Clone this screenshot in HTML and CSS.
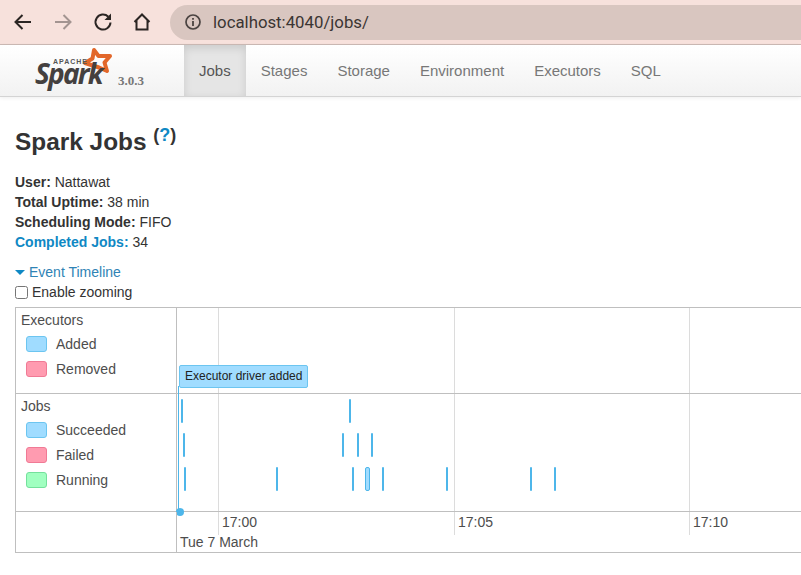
FILE: index.html
```html
<!DOCTYPE html>
<html lang="en">
<head>
    <meta charset="UTF-8">
    <title>Spark Jobs</title>
    <link rel="stylesheet" href="styles.css">
</head>
<body>
<div class="browser-bar">
    <svg class="tool" width="24" height="24" viewBox="0 0 24 24"><path d="M20 12H5M11.500 5L4.500 12L11.500 19" fill="none" stroke="#2b2523" stroke-width="2"/></svg>
    <svg class="tool" width="24" height="24" viewBox="0 0 24 24"><path d="M4 12H19M12.500 5L19.500 12L12.500 19" fill="none" stroke="#a39491" stroke-width="2"/></svg>
    <svg class="tool" width="24" height="24" viewBox="0 0 24 24"><path d="M19.500 12.500A7.500 7.500 0 1 1 17.300 6.700" fill="none" stroke="#2b2523" stroke-width="2"/><path d="M20 3.500V10H13.500Z" fill="#2b2523"/></svg>
    <svg class="tool" width="24" height="24" viewBox="0 0 24 24"><path d="M4.500 12L12 4.500L19.500 12M6.500 10.500V19.500H17.500V10.500" fill="none" stroke="#2b2523" stroke-width="2"/></svg>
    <div class="address">
        <svg width="18" height="18" viewBox="0 0 18 18"><circle cx="9" cy="9" r="7" fill="none" stroke="#4a4341" stroke-width="1.700"/><path d="M9 8V13M9 5V6.700" stroke="#4a4341" stroke-width="1.800"/></svg>
        <span>localhost:4040/jobs/</span>
    </div>
</div>

<div class="navbar">
    <div class="brand">
        <div class="logo">
            <svg class="logo-star" width="36" height="36" viewBox="0 0 36 36"><path d="M14 4L18.500 10L30 10L24.500 16.500L27 25L19 21.500L5 17L12.500 12.500Z" fill="none" stroke="#e2672a" stroke-width="4" stroke-linejoin="round"/></svg>
            <span class="logo-apache">APACHE</span>
            <span class="logo-spark">Spark</span>
        </div>
        <span class="version">3.0.3</span>
    </div>
    <ul class="tabs">
        <li class="tab active">Jobs</li>
        <li class="tab">Stages</li>
        <li class="tab">Storage</li>
        <li class="tab">Environment</li>
        <li class="tab">Executors</li>
        <li class="tab">SQL</li>
    </ul>
</div>

<div class="content">
    <h3 class="title">Spark Jobs <sup class="help">(<a>?</a>)</sup></h3>
    <ul class="summary">
        <li><strong>User:</strong> Nattawat</li>
        <li><strong>Total Uptime:</strong> 38 min</li>
        <li><strong>Scheduling Mode:</strong> FIFO</li>
        <li><a><strong>Completed Jobs:</strong></a> 34</li>
    </ul>
    <div class="timeline-toggle"><span class="arrow"></span><a>Event Timeline</a></div>
    <label class="zoom-option"><input type="checkbox"> Enable zooming</label>

    <div class="timeline">
        <div class="labels executors-label">
            <div class="group-name">Executors</div>
            <div class="legend"><span class="swatch blue"></span>Added</div>
            <div class="legend"><span class="swatch red"></span>Removed</div>
        </div>
        <div class="panel executors-panel">
            <span class="grid-line" style="left: 41px"></span>
            <span class="grid-line" style="left: 277px"></span>
            <span class="grid-line" style="left: 512px"></span>
            <div class="event-box">Executor driver added</div>
        </div>
        <div class="labels jobs-label">
            <div class="group-name">Jobs</div>
            <div class="legend"><span class="swatch blue"></span>Succeeded</div>
            <div class="legend"><span class="swatch red"></span>Failed</div>
            <div class="legend"><span class="swatch green"></span>Running</div>
        </div>
        <div class="panel jobs-panel">
            <span class="grid-line" style="left: 41px"></span>
            <span class="grid-line" style="left: 277px"></span>
            <span class="grid-line" style="left: 512px"></span>
            <span class="job" style="left: 4px; top: 5px"></span>
            <span class="job" style="left: 172px; top: 5px"></span>
            <span class="job" style="left: 6px; top: 39px"></span>
            <span class="job" style="left: 165px; top: 39px"></span>
            <span class="job" style="left: 180px; top: 39px"></span>
            <span class="job" style="left: 194px; top: 39px"></span>
            <span class="job" style="left: 7px; top: 73px"></span>
            <span class="job" style="left: 99px; top: 73px"></span>
            <span class="job" style="left: 175px; top: 73px"></span>
            <span class="job wide" style="left: 188px; top: 73px"></span>
            <span class="job" style="left: 205px; top: 73px"></span>
            <span class="job" style="left: 269px; top: 73px"></span>
            <span class="job" style="left: 353px; top: 73px"></span>
            <span class="job" style="left: 377px; top: 73px"></span>
            <span class="event-line"></span>
            <span class="event-dot"></span>
        </div>
        <div class="labels axis-label"></div>
        <div class="panel axis">
            <span class="grid-line short" style="left: 41px"></span>
            <span class="grid-line short" style="left: 277px"></span>
            <span class="grid-line short" style="left: 512px"></span>
            <span class="tick" style="left: 45px">17:00</span>
            <span class="tick" style="left: 281px">17:05</span>
            <span class="tick" style="left: 516px">17:10</span>
            <span class="date">Tue 7 March</span>
        </div>
    </div>
</div>
</body>
</html>
```

FILE: styles.css
```css
html, body {
    margin: 0;
    height: 575px;
    overflow: hidden;
}
body {
    background-color: #ffffff;
    color: #333333;
    font-family: "Liberation Sans", Arial, sans-serif;
    font-size: 14px;
}
a {
    color: #0f88c4;
}

.browser-bar {
    display: flex;
    align-items: center;
    height: 45px;
    box-sizing: border-box;
    padding-left: 11px;
    background-color: #f7e1dc;
    border-bottom: 1px solid #cdbab5;
}
.tool {
    flex: none;
    margin-right: 16px;
}
.tool:nth-child(3) {
    margin-right: 15px;
}
.tool:nth-child(4) {
    margin-right: 16px;
}
.address {
    display: flex;
    align-items: center;
    gap: 11px;
    flex: 1;
    height: 35px;
    padding-left: 14px;
    border-radius: 18px 0 0 18px;
    background-color: #d9c6c0;
    color: #3b3533;
    font-family: "Roboto", sans-serif;
    font-size: 16.8px;
}

.navbar {
    display: flex;
    height: 52px;
    box-sizing: border-box;
    background-image: linear-gradient(to bottom, #ffffff, #f2f2f2);
    border-bottom: 1px solid #d4d4d4;
    box-shadow: 0 1px 4px rgba(0, 0, 0, 0.07);
}
.brand {
    display: flex;
    width: 184px;
    flex: none;
}
.logo {
    position: relative;
    width: 118px;
}
.logo-star {
    position: absolute;
    left: 80px;
    top: 1px;
}
.logo-apache {
    position: absolute;
    left: 53px;
    top: 14px;
    font-size: 7px;
    line-height: 6px;
    font-weight: bold;
    letter-spacing: 1px;
    color: #555555;
}
.logo-spark {
    position: absolute;
    left: 35px;
    top: 20px;
    font-family: "Open Sans", sans-serif;
    font-size: 28px;
    line-height: 16px;
    font-style: italic;
    font-weight: 700;
    letter-spacing: -1.8px;
    color: #44403f;
}
.version {
    margin-top: 28px;
    font-family: "Liberation Serif", serif;
    font-size: 13px;
    font-weight: bold;
    color: #777777;
}
.tabs {
    display: flex;
    margin: 0;
    padding: 0;
    list-style: none;
}
.tab {
    padding: 17px 15px 0;
    color: #777777;
    font-size: 15px;
}
.tab.active {
    background-color: #e5e5e5;
    color: #555555;
    box-shadow: inset 0 3px 8px rgba(0, 0, 0, 0.12);
}

.content {
    padding: 0 0 0 15px;
}
.title {
    margin: 29px 0 0;
    font-size: 24.4px;
    line-height: 32px;
    font-weight: bold;
}
.help {
    font-size: 18px;
    line-height: 0;
}
.help a {
    font-weight: bold;
}
.summary {
    margin: 14px 0 0;
    padding: 0;
    list-style: none;
    line-height: 20px;
}
.timeline-toggle {
    margin-top: 10px;
    line-height: 20px;
}
.timeline-toggle a {
    color: #2f83b5;
}
.arrow {
    display: inline-block;
    margin: 0 4px 2px 0;
    border-left: 5px solid transparent;
    border-right: 5px solid transparent;
    border-top: 5px solid #0f88c4;
}
.zoom-option {
    display: flex;
    align-items: center;
    height: 20px;
    gap: 4px;
}
.zoom-option input {
    width: 13px;
    height: 13px;
    margin: 1px 0 0 0;
}

.timeline {
    display: grid;
    grid-template-columns: 161px 640px;
    grid-template-rows: 86px 118px 40px;
    margin-top: 5px;
    width: 802px;
    border-top: 1px solid #bfbfbf;
    border-bottom: 1px solid #bfbfbf;
    color: #4d4d4d;
}
.labels {
    padding-left: 5px;
    border-left: 1px solid #bfbfbf;
}
.panel {
    position: relative;
    border-left: 1px solid #bfbfbf;
}
.executors-label, .executors-panel {
    border-bottom: 1px solid #bfbfbf;
}
.jobs-label, .jobs-panel {
    border-bottom: 1px solid #bfbfbf;
}
.group-name {
    margin-top: 2px;
    line-height: 20px;
}
.legend {
    display: flex;
    align-items: center;
    margin: 5px 0 0 5px;
    height: 20px;
}
.group-name + .legend {
    margin-top: 4px;
}
.swatch {
    width: 19px;
    height: 14px;
    margin-right: 9px;
    border: 1px solid;
    border-radius: 3px;
}
.swatch.blue {
    background-color: #a0dcff;
    border-color: #6cc5f0;
}
.swatch.red {
    background-color: #ff9bb0;
    border-color: #f07a95;
}
.swatch.green {
    background-color: #a0ffc0;
    border-color: #74e09c;
}
.grid-line {
    position: absolute;
    top: 0;
    bottom: 0;
    width: 1px;
    background-color: #dcdcdc;
}
.grid-line.short {
    bottom: 17px;
}
.event-box {
    position: absolute;
    left: 2px;
    top: 57px;
    padding: 0 5px;
    height: 21px;
    line-height: 21px;
    border: 1px solid #6cc5f0;
    border-radius: 2px;
    background-color: #a0dcff;
    color: #222222;
    font-size: 12px;
    white-space: nowrap;
}
.job {
    position: absolute;
    width: 2px;
    height: 24px;
    border-radius: 1px;
    background-color: #4db6ea;
}
.job.wide {
    width: 3px;
    background-color: #a0dcff;
    border: 1px solid #4db6ea;
    border-radius: 2px;
    height: 22px;
}
.event-line {
    position: absolute;
    left: 1px;
    top: -8px;
    bottom: 0;
    width: 1px;
    background-color: #4db6ea;
}
.event-dot {
    position: absolute;
    left: -1px;
    bottom: -5px;
    width: 8px;
    height: 8px;
    border-radius: 50%;
    background-color: #4db6ea;
}
.tick {
    position: absolute;
    top: 2px;
    line-height: 16px;
}
.date {
    position: absolute;
    left: 3px;
    top: 22px;
    line-height: 16px;
}
```
